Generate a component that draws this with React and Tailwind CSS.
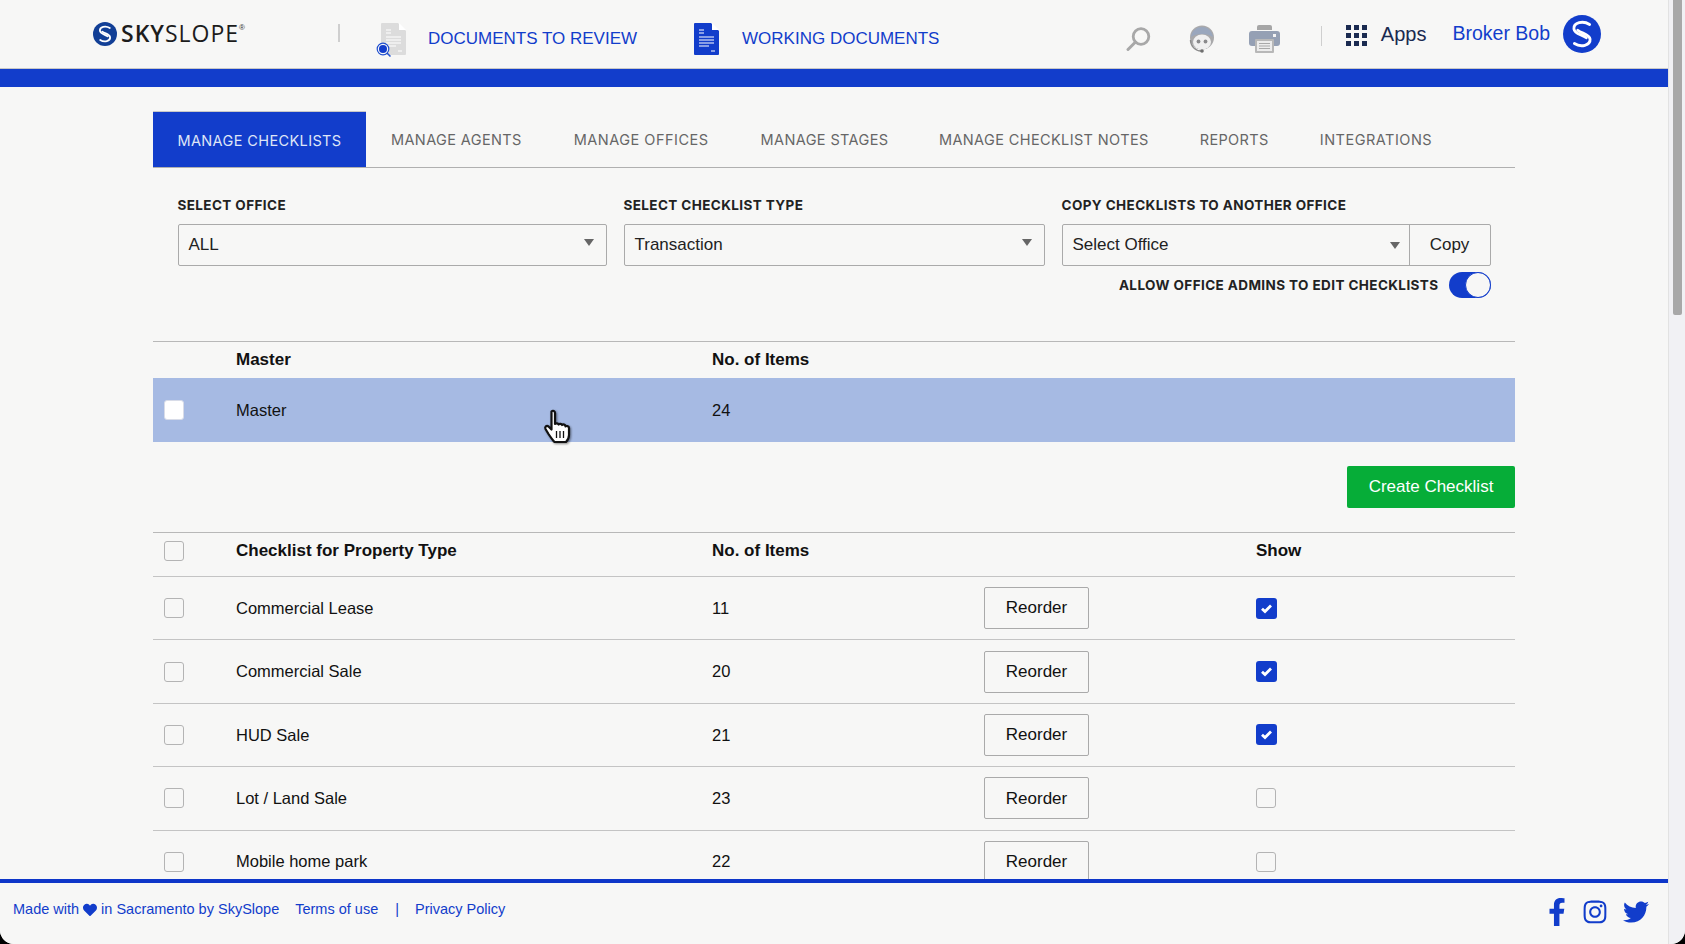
import React from "react";
import { FaFacebookF, FaInstagram, FaTwitter, FaHeart } from "react-icons/fa";

const LS = "font-['Liberation_Sans',Arial,sans-serif]";
const MS = "font-['Inter',sans-serif]";

function SLogo({ size, bg = "#123f96" }) {
  return (
    <svg width={size} height={size} viewBox="0 0 40 40" className="shrink-0">
      <circle cx="20" cy="20" r="20" fill={bg} />
      <path d="M28 10C21 5.500 11 8 11.500 14.500c.5 5.500 9 6 13 9.500" fill="none" stroke="#fff" strokeWidth="3" strokeLinecap="round" />
      <path d="M12 30c7 4.500 17 2 16.500-4.500-.5-5.500-9-6-13-9.500" fill="none" stroke="#fff" strokeWidth="3" strokeLinecap="round" />
    </svg>
  );
}

function DocIcon({ fill, line }) {
  return (
    <svg width="25" height="32" viewBox="0 0 25 32" className="shrink-0">
      <path d="M1 0h16l8 8v23a1 1 0 0 1-1 1H1a1 1 0 0 1-1-1V1a1 1 0 0 1 1-1z" fill={fill} />
      <path d="M18 0l7 7h-7z" fill="#fff" />
      <path d="M5 7h5M5 10h5M5 14h15M5 17h15M5 20h15M5 23h10M17 28h4" stroke={line} strokeWidth="1.200" />
    </svg>
  );
}

function ReviewIcon() {
  return (
    <div className="relative">
      <DocIcon fill="#dcdcdc" line="#fff" />
      <svg width="16" height="16" viewBox="0 0 16 16" className="absolute -left-[5px] -bottom-[3px]">
        <circle cx="7" cy="7" r="5.800" fill="#f7f7f6" stroke="#1f4fd0" strokeWidth="1.200" />
        <circle cx="7" cy="7" r="4" fill="#123dcb" />
        <path d="M11 11l3.500 3.500" stroke="#1f4fd0" strokeWidth="1.500" />
      </svg>
    </div>
  );
}

function SearchIcon() {
  return (
    <svg width="25" height="24" viewBox="0 0 25 24" className="shrink-0">
      <circle cx="15" cy="9.500" r="7.800" fill="none" stroke="#a8a8a8" strokeWidth="2.800" />
      <path d="M9.500 15L2 22.500" stroke="#a8a8a8" strokeWidth="3" strokeLinecap="round" />
    </svg>
  );
}

function AgentIcon() {
  return (
    <svg width="28" height="28" viewBox="0 0 28 28" className="shrink-0">
      <circle cx="14" cy="12.500" r="12" fill="#a9a9ab" />
      <path d="M3 12C4 5 9 2 14 2s10 3 11 10c-3-2-6-3-11-3S6 10 3 12z" fill="#9aa7bd" />
      <ellipse cx="14" cy="17" rx="9" ry="7.500" fill="#f0f0f0" />
      <circle cx="10.500" cy="16.500" r="1.900" fill="#8a8a8c" />
      <circle cx="17.500" cy="16.500" r="1.900" fill="#8a8a8c" />
      <path d="M2.500 15c0 6 5 11 10.500 11" fill="none" stroke="#8c8c8c" strokeWidth="1.400" />
      <circle cx="14" cy="26" r="1.800" fill="#6f6f6f" />
    </svg>
  );
}

function PrinterIcon() {
  return (
    <svg width="31" height="28" viewBox="0 0 31 28" className="shrink-0">
      <path d="M8 5V2a2 2 0 0 1 2-2h11a2 2 0 0 1 2 2v3z" fill="#a6a6a6" />
      <rect x="0" y="6" width="31" height="15" rx="3" fill="#95a0b4" />
      <rect x="24" y="9" width="3" height="3" fill="#f4f4f4" />
      <rect x="6" y="14" width="19" height="14" rx="1" fill="#b8b8b8" />
      <rect x="8" y="16" width="15" height="10" fill="#ececec" />
      <path d="M10 18.500h11M10 21h11M10 23.500h11" stroke="#a8a8a8" strokeWidth="1" />
    </svg>
  );
}

function Grid9() {
  return (
    <div className="grid grid-cols-3 gap-[2.500px] w-[21px] shrink-0">
      {Array.from({ length: 9 }).map((_, i) => (
        <span key={i} className="h-[5.200px] bg-[#1a2a50]" />
      ))}
    </div>
  );
}

function Check({ on, white }) {
  if (on) {
    return (
      <span className="w-[21px] h-[21px] rounded-[3px] bg-[#123dcb] flex items-center justify-center shrink-0">
        <svg width="13" height="13" viewBox="0 0 13 13">
          <path d="M2 6.800l3 2.800 6-6" fill="none" stroke="#fff" strokeWidth="2.800" />
        </svg>
      </span>
    );
  }
  return (
    <span className={`w-[20px] h-[20px] rounded-[3px] border shrink-0 block ${white ? "bg-white border-[#d8dce8]" : "bg-[#f7f7f6] border-[#b4b4b4]"}`} />
  );
}

function Select({ label, w }) {
  return (
    <div className={`${w} h-[42px] border border-[#aaaaaa] rounded-[2px] flex items-center justify-between pl-[10px] pr-[12px] text-[17px] text-[#222]`}>
      <span>{label}</span>
      <span className="w-0 h-0 border-x-[5px] border-x-transparent border-t-[7px] border-t-[#666] -mt-[6px]" />
    </div>
  );
}

const tabs = [
  ["MANAGE CHECKLISTS", "w-[213px] justify-center"],
  ["MANAGE AGENTS", "ml-[25px]"],
  ["MANAGE OFFICES", "ml-[52px] tracking-[0.500px]"],
  ["MANAGE STAGES", "ml-[52px]"],
  ["MANAGE CHECKLIST NOTES", "ml-[50.500px]"],
  ["REPORTS", "ml-[51px]"],
  ["INTEGRATIONS", "ml-[51px] tracking-[0.500px]"],
];

const rows = [
  ["Commercial Lease", "11", true],
  ["Commercial Sale", "20", true],
  ["HUD Sale", "21", true],
  ["Lot / Land Sale", "23", false],
  ["Mobile home park", "22", false],
];

const cols = "grid grid-cols-[83px_476px_272px_272px_1fr] items-center";
const label = `${MS} text-[13.500px] tracking-[0.400px] font-bold text-[#222] leading-[16px] mb-[11px]`;

export default function App() {
  return (
    <div className={`${LS} w-[1685px] h-[944px] overflow-hidden bg-black`}>
      <div className="w-full h-full flex bg-[#f7f7f6] rounded-b-[14px] overflow-hidden">
        <div className="w-[1668px] h-full flex flex-col">
          <header className="h-[69px] shrink-0 flex items-center border-b border-[#c8c8c8] pl-[93px] pr-[67px]">
            <div className="flex items-center w-[245px] h-full -mt-[1px]">
              <SLogo size={24} />
              <span className="ml-[4px] text-[23px] leading-none tracking-[1px] text-[#1c1c1c] font-['Open_Sans',sans-serif]">
                <b className="font-semibold">SKY</b>SLOPE
              </span>
              <span className="text-[8px] -mt-[12px] text-[#333]">®</span>
            </div>
            <span className="w-[2px] h-[18px] bg-[#cfcfcf] -mt-[3px]" />
            <div className="ml-[41px] flex items-center mt-[9px]">
              <ReviewIcon />
              <a className="ml-[22px] text-[17px] text-[#123dcb]">DOCUMENTS TO REVIEW</a>
            </div>
            <div className="ml-[57px] flex items-center mt-[9px]">
              <DocIcon fill="#123dcb" line="#fff" />
              <a className="ml-[23px] text-[17px] text-[#123dcb]">WORKING DOCUMENTS</a>
            </div>
            <div className="flex-1" />
            <div className="flex items-center mt-[9px]">
              <SearchIcon />
              <div className="ml-[37px]"><AgentIcon /></div>
              <div className="ml-[33px]"><PrinterIcon /></div>
              <span className="ml-[41px] w-[1px] h-[20px] bg-[#cfcfcf] -mt-[6px]" />
              <div className="ml-[24px] -mt-[6px]"><Grid9 /></div>
              <span className="ml-[14px] text-[20px] text-[#1a2a50] -mt-[9px]">Apps</span>
              <span className="ml-[26px] text-[19.500px] text-[#123dcb] -mt-[9px]">Broker Bob</span>
              <div className="ml-[13px] -mt-[9px]"><SLogo size={38} bg="#123dcb" /></div>
            </div>
          </header>
          <div className="h-[18px] shrink-0 bg-[#123dcb]" />

          <main className="flex-1 min-h-0 overflow-hidden pt-[24px] pl-[153px] pr-[153px]">
            <nav className={`${MS} h-[57px] flex items-stretch border-b border-[#b0b0b0] text-[14.500px] tracking-[0.380px] text-[#666]`}>
              {tabs.map(([t, c], i) => (
                <span key={t} className={`flex items-center pt-[2px] ${c} ${i === 0 ? "bg-[#123dcb] text-[#dfe5f7] border-t border-t-[#c8c8c8]" : ""}`}>{t}</span>
              ))}
            </nav>

            <section className="pl-[24.500px] pr-[25px] mt-[29px] h-[144px]">
              <div className="flex gap-[17px]">
                <div>
                  <div className={label}>SELECT OFFICE</div>
                  <Select label="ALL" w="w-[429px]" />
                </div>
                <div>
                  <div className={label}>SELECT CHECKLIST TYPE</div>
                  <Select label="Transaction" w="w-[421px]" />
                </div>
                <div>
                  <div className={label}>COPY CHECKLISTS TO ANOTHER OFFICE</div>
                  <div className="flex w-[429px] h-[42px] border border-[#aaaaaa] rounded-[2px] text-[17px] text-[#222]">
                    <div className="flex-1 flex items-center justify-between pl-[10px] pr-[9px]">
                      <span>Select Office</span>
                      <span className="w-0 h-0 border-x-[5px] border-x-transparent border-t-[7px] border-t-[#666]" />
                    </div>
                    <div className="w-[81px] border-l border-[#aaaaaa] flex items-center justify-center">Copy</div>
                  </div>
                  <div className="flex items-center justify-end mt-[6px] h-[26px]">
                    <span className={`${MS} text-[13.500px] tracking-[0.400px] font-bold text-[#222] mr-[10px] mt-[1px]`}>ALLOW OFFICE ADMINS TO EDIT CHECKLISTS</span>
                    <span className="w-[42px] h-[26px] rounded-full bg-[#123dcb] flex justify-end">
                      <span className="w-[26px] h-[26px] rounded-full bg-[#f7f7f6] border border-[#123dcb] block" />
                    </span>
                  </div>
                </div>
              </div>
            </section>

            <section className="text-[16.500px] text-[#111]">
              <div className={`${cols} h-[37px] pb-[1px] border-t border-[#b8b8b8] font-bold text-[17px]`}>
                <span />
                <span>Master</span>
                <span>No. of Items</span>
              </div>
              <div className={`${cols} h-[64px] bg-[#a6bae3] relative`}>
                <span className="pl-[11px]"><Check white /></span>
                <span>Master</span>
                <span>24</span>
                <svg width="33" height="36" viewBox="0 0 30 36" className="absolute left-[389px] top-[31px]" style={{ filter: "drop-shadow(1px 1px 1px rgba(0,0,0,.45))" }}>
                  <path d="M8 2.500c1.500-1.500 3.500-.5 3.500 1.500v11c1-1 3-1 3.500.5 1-1 3-1 3.500.5 1-1 3.500-.5 3.500 1.500 .5-.8 3.500-.8 3.500 1.500V26c0 3-1 5-3 7H11c-2-2-4-5-6-8l-3-5c-1-2 1-4 3-2.500l3 3V4z" fill="#fff" stroke="#111" strokeWidth="2.200" strokeLinejoin="round" />
                  <path d="M13 22v7M16.500 22v7M20 22v7" stroke="#111" strokeWidth="1.300" />
                </svg>
              </div>
              <div className="flex justify-end mt-[24px] mb-[24px]">
                <button className="w-[168px] h-[42px] rounded-[2px] bg-[#06ad38] text-white text-[17px]">Create Checklist</button>
              </div>
              <div className={`${cols} h-[44px] pb-[7px] border-t border-[#b8b8b8] font-bold text-[17px]`}>
                <span className="pl-[11px]"><Check /></span>
                <span>Checklist for Property Type</span>
                <span>No. of Items</span>
                <span />
                <span>Show</span>
              </div>
              {rows.map(([name, n, show]) => (
                <div key={name} className={`${cols} h-[63.400px] border-t border-[#c4c4c4]`}>
                  <span className="pl-[11px]"><Check /></span>
                  <span>{name}</span>
                  <span>{n}</span>
                  <span>
                    <button className="w-[105px] h-[42px] border border-[#aaaaaa] rounded-[2px] text-[17px]">Reorder</button>
                  </span>
                  <span><Check on={show} /></span>
                </div>
              ))}
            </section>
          </main>

          <footer className="h-[65px] shrink-0 border-t-[4px] border-[#0e36c9] bg-[#f7f7f6] flex items-center pl-[13px] pr-[19px] text-[14.500px] text-[#123dcb]">
            <div className="flex items-center -mt-[7px]">
              <span>Made with</span>
              <FaHeart className="mx-[4px] text-[#123dcb] text-[14px]" />
              <span>in Sacramento by SkySlope</span>
              <span className="ml-[16px]">Terms of use</span>
              <span className="ml-[17px]">|</span>
              <span className="ml-[16px]">Privacy Policy</span>
            </div>
            <div className="flex-1" />
            <div className="flex items-center text-[26px] -mt-[3px]">
              <FaFacebookF className="text-[28px]" />
              <FaInstagram className="ml-[11px]" />
              <FaTwitter className="ml-[15px]" />
            </div>
          </footer>
        </div>
        <aside className="w-[17px] h-full bg-[#f1f1f4] border-l border-[#e2e2e2] pl-[4px] pr-[3px]">
          <div className="h-[315px] bg-[#a8a8a8] rounded-b-[2px]" />
        </aside>
      </div>
    </div>
  );
}
